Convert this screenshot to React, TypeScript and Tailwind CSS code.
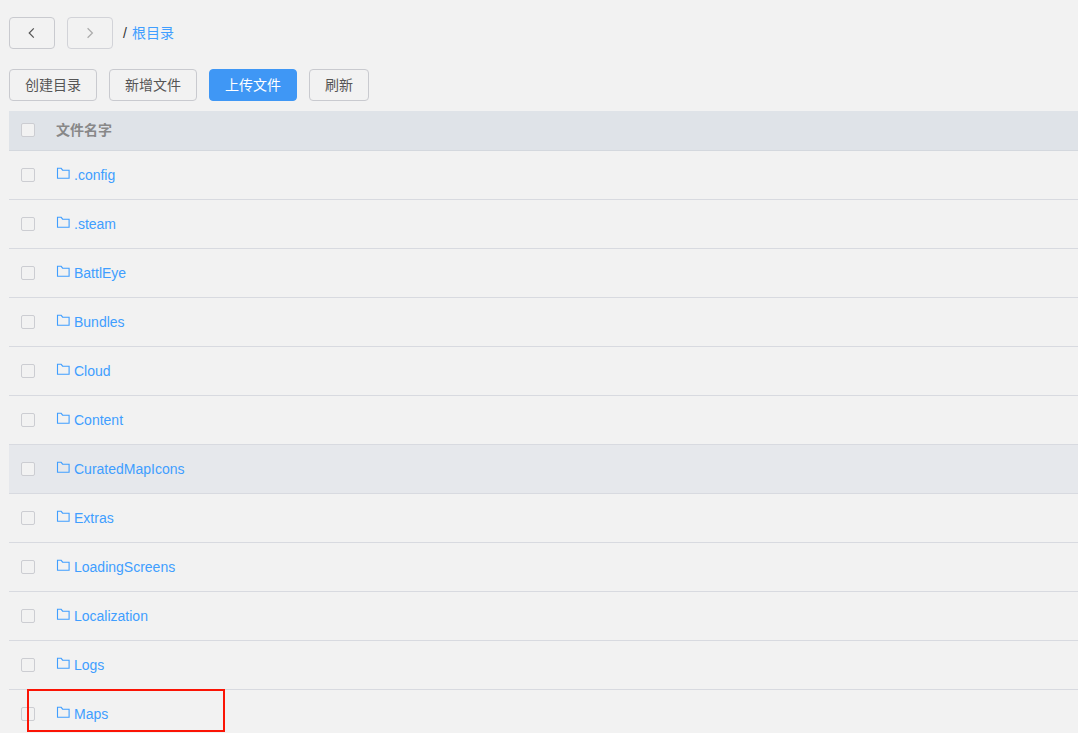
import React from 'react';
import { clsx } from 'clsx';

interface FileEntry {
  name: string;
  active?: boolean;
  marked?: boolean;
}

const files: FileEntry[] = [
  { name: '.config' },
  { name: '.steam' },
  { name: 'BattlEye' },
  { name: 'Bundles' },
  { name: 'Cloud' },
  { name: 'Content' },
  { name: 'CuratedMapIcons', active: true },
  { name: 'Extras' },
  { name: 'LoadingScreens' },
  { name: 'Localization' },
  { name: 'Logs' },
  { name: 'Maps', marked: true },
];

const FolderIcon = () => (
  <svg width="14" height="16" viewBox="0 0 14 16" fill="none" aria-hidden="true" className="shrink-0">
    <path d="M1.5 3.3H5.2L6.6 5.2H13.1V13.2H1.5Z" stroke="#409eff" strokeWidth="1.1" />
  </svg>
);

const Chevron = ({ flipped }: { flipped?: boolean }) => (
  <svg width="14" height="14" viewBox="0 0 14 14" fill="none" stroke="currentColor" aria-hidden="true">
    <path d={flipped ? 'M4.6 2.3L9.4 7L4.6 11.7' : 'M8.8 2.3L4.2 7L8.8 11.7'} strokeWidth="1.2" />
  </svg>
);

interface ButtonProps {
  children: React.ReactNode;
  primary?: boolean;
  disabled?: boolean;
  label?: string;
}

const Button = ({ children, primary, disabled, label }: ButtonProps) => (
  <button
    type="button"
    disabled={disabled}
    aria-label={label}
    className={clsx(
      'flex h-8 items-center justify-center rounded border px-[15px] text-sm',
      primary && 'border-[#3f97f5] bg-[#3f97f5] text-white',
      !primary && !disabled && 'border-[#c9cacf] text-[#555]',
      disabled && 'border-[#d2d3d8] text-[#aaa]'
    )}
  >
    {children}
  </button>
);

const CheckBox = ({ label }: { label: string }) => (
  <input
    type="checkbox"
    aria-label={label}
    className="block size-3.5 appearance-none rounded-xs border border-[#cccdd2] bg-[#f2f2f2] checked:bg-[#409eff]"
  />
);

const FileRow = ({ file }: { file: FileEntry }) => (
  <tr className={clsx('h-[49px] border-b border-[#d8dae0]', file.active && 'bg-[#e6e8ec]')}>
    <td className="relative pl-3">
      <CheckBox label={file.name} />
      {file.marked && (
        <div className="pointer-events-none absolute -top-px left-[18px] h-[43px] w-[198px] border-2 border-[#fb1405]" />
      )}
    </td>
    <td>
      <a href="#" className="flex w-fit items-start gap-1 text-sm text-[#409eff]">
        <FolderIcon />
        {file.name}
      </a>
    </td>
  </tr>
);

const App = () => {
  return (
    <div className="h-screen overflow-hidden bg-[#f2f2f2] pl-[9px] pt-[17px] font-['Liberation_Sans','Noto_Sans_CJK_SC',sans-serif]">
      <nav className="mb-5 flex items-center gap-3">
        <Button label="后退">
          <Chevron />
        </Button>
        <Button label="前进" disabled>
          <Chevron flipped />
        </Button>
        <div className="-ml-0.5 flex gap-[5px] text-sm text-[#333]">
          <span>/</span>
          <a href="#" className="text-[#409eff]">根目录</a>
        </div>
      </nav>

      <div className="mb-2.5 flex gap-3">
        <Button>创建目录</Button>
        <Button>新增文件</Button>
        <Button primary>上传文件</Button>
        <Button>刷新</Button>
      </div>

      <table className="w-full table-fixed border-collapse text-left">
        <thead>
          <tr className="h-[39px] border-b border-[#d4d8de] bg-[#dfe3e8]">
            <th className="w-[47px] pl-3">
              <CheckBox label="全选" />
            </th>
            <th className="text-sm font-bold text-[#888]">文件名字</th>
          </tr>
        </thead>
        <tbody>
          {files.map(file => (
            <FileRow key={file.name} file={file} />
          ))}
        </tbody>
      </table>
    </div>
  );
};

export default App;
